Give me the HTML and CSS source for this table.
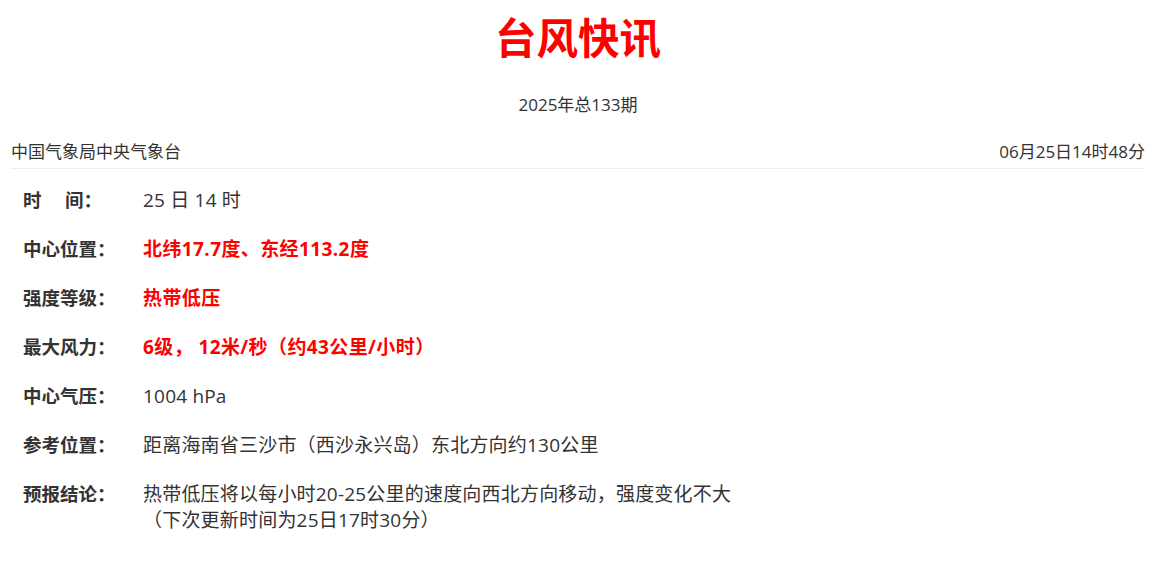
FILE: index.html
```html
<!DOCTYPE html>
<html>
	<head>
		<meta content="text/html;charset=utf-8" http-equiv="Content-Type">
		<link rel="stylesheet" href="styles.css">
	</head>
	<body>
		<div class="wrapper">
			<h1 class="title">台风快讯</h1>
			<p class="issue">2025年总133期</p>

			<div class="source">
				<span>中国气象局中央气象台</span>
				<span>06月25日14时48分</span>
			</div>

			<div class="report">
				<div class="label">时<span class="gap"></span>间：</div>
				<div class="value">25 日 14 时</div>

				<div class="label">中心位置：</div>
				<div class="value hot">北纬17.7度、东经113.2度</div>

				<div class="label">强度等级：</div>
				<div class="value hot">热带低压</div>

				<div class="label">最大风力：</div>
				<div class="value hot">6级， 12米/秒（约43公里/小时）</div>

				<div class="label">中心气压：</div>
				<div class="value">1004 hPa</div>

				<div class="label">参考位置：</div>
				<div class="value">距离海南省三沙市（西沙永兴岛）东北方向约130公里</div>

				<div class="label">预报结论：</div>
				<div class="value">热带低压将以每小时20-25公里的速度向西北方向移动，强度变化不大<br>（下次更新时间为25日17时30分）</div>
			</div>
		</div>
	</body>
</html>
```

FILE: styles.css
```css
body {
	margin: 0;
	font-family: "Open Sans", "Noto Sans CJK SC", sans-serif;
	color: #333;
	background: #fff;
}
.wrapper {
	margin: 0 31px 0 11px;
}
.title {
	margin: 18px 0 0;
	font-size: 41.5px;
	line-height: 40px;
	color: #f00;
	text-align: center;
	font-weight: bold;
}
.issue {
	margin: 37px 0 0;
	font-size: 17px;
	line-height: 20px;
	text-align: center;
}
.source {
	display: flex;
	justify-content: space-between;
	margin-top: 25px;
	padding-bottom: 4px;
	font-size: 17px;
	line-height: 24px;
	border-bottom: 1px solid #eee;
}
.report {
	display: grid;
	grid-template-columns: 120px 1fr;
	row-gap: 23px;
	padding: 18px 0 0 12px;
	font-size: 19px;
	line-height: 26px;
}
.label {
	font-weight: bold;
	font-size: 18.5px;
}
.value {
	letter-spacing: 0.2px;
}
.gap {
	display: inline-block;
	width: 1.27em;
}
.hot {
	color: #f00;
	font-weight: bold;
	letter-spacing: 0.4px;
}
```
